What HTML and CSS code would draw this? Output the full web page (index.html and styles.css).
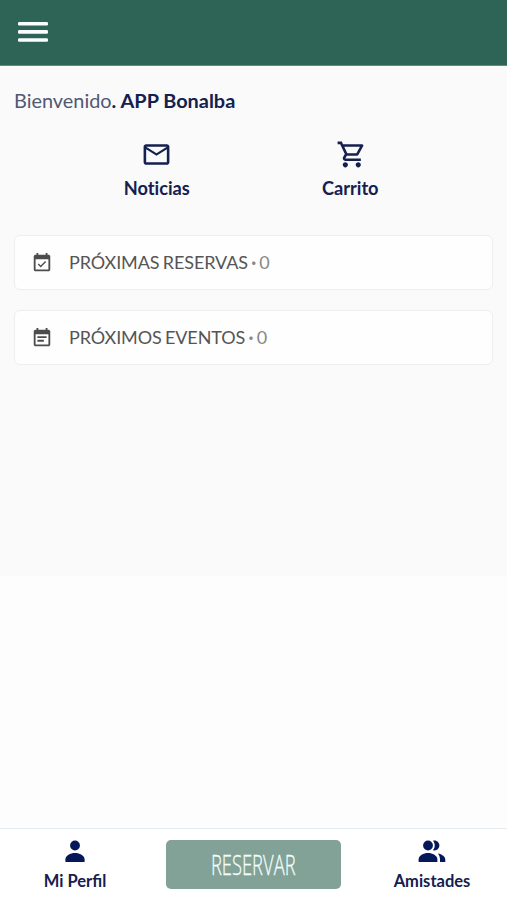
FILE: index.html
```html
<!DOCTYPE html>
<html lang="es">
<head>
    <meta charset="UTF-8">
    <meta name="viewport" content="width=device-width, initial-scale=1.0">
    <title>APP Bonalba</title>
    <link rel="stylesheet" href="styles.css">
</head>
<body>
    <header class="topbar">
        <svg class="menu" viewBox="0 0 30 20">
            <rect width="30" height="3.6" rx="1.3"/>
            <rect y="8.1" width="30" height="3.6" rx="1.3"/>
            <rect y="16.2" width="30" height="3.6" rx="1.3"/>
        </svg>
    </header>
    <main class="content">
        <p class="welcome">Bienvenido<b>. APP Bonalba</b></p>
        <div class="shortcuts">
            <a class="shortcut">
                <svg class="shortcut-icon" viewBox="0 0 24 24"><path d="M22 6c0-1.100-.9-2-2-2H4c-1.100 0-2 .9-2 2v12c0 1.100.9 2 2 2h16c1.100 0 2-.9 2-2V6zm-2 0l-8 5-8-5h16zm0 12H4V8l8 5 8-5v10z"/></svg>
                <span>Noticias</span>
            </a>
            <a class="shortcut">
                <svg class="shortcut-icon" viewBox="-1 0 24 24"><path d="M15.550 13c.75 0 1.410-.41 1.750-1.030l3.580-6.490c.37-.66-.11-1.480-.87-1.480H5.210l-.94-2H1v2h2l3.600 7.590-1.350 2.440C4.520 15.370 5.480 17 7 17h12v-2H7l1.100-2h7.450zM6.160 6h12.150l-2.760 5H8.530L6.160 6zM7 18c-1.100 0-1.990.9-1.990 2S5.900 22 7 22s2-.9 2-2-.9-2-2-2zm10 0c-1.100 0-1.990.9-1.990 2s.89 2 1.990 2 2-.9 2-2-.9-2-2-2z"/></svg>
                <span>Carrito</span>
            </a>
        </div>
        <div class="card">
            <svg class="card-icon" viewBox="0 0 24 24"><path d="M19 3h-1V1h-2v2H8V1H6v2H5c-1.100 0-2 .9-2 2v14c0 1.100.9 2 2 2h14c1.100 0 2-.9 2-2V5c0-1.100-.9-2-2-2zm0 16H5V8h14v11z"/><path d="M16.500 10.900l-1.060-1.060-4.880 4.880-2.110-2.110-1.060 1.060 3.170 3.170z"/></svg>
            <span class="card-title">PRÓXIMAS RESERVAS <span class="count"><b>·</b> 0</span></span>
        </div>
        <div class="card">
            <svg class="card-icon" viewBox="0 0 24 24"><path d="M19 3h-1V1h-2v2H8V1H6v2H5c-1.100 0-2 .9-2 2v14c0 1.100.9 2 2 2h14c1.100 0 2-.9 2-2V5c0-1.100-.9-2-2-2zm0 16H5V8h14v11z"/><path d="M7 10h10v2H7zM7 14h7v2H7z"/></svg>
            <span class="card-title">PRÓXIMOS EVENTOS <span class="count"><b>·</b> 0</span></span>
        </div>
    </main>
    <nav class="bottombar">
        <a class="tab">
            <svg class="tab-icon" viewBox="0 0 20 22"><circle cx="10" cy="5.500" r="4.900"/><path d="M.4 22v-2.500c0-4 5-6.500 9.600-6.500s9.600 2.500 9.600 6.500V22z"/></svg>
            <span>Mi Perfil</span>
        </a>
        <button class="book"><span class="book-label">RESERVAR</span></button>
        <a class="tab">
            <svg class="tab-icon friends" viewBox="0 0 28 22"><circle cx="10" cy="5.500" r="4.900"/><path d="M.6 22v-2.500c0-4 5-6.500 9.400-6.500s9.400 2.500 9.400 6.500V22z"/><path d="M15 .8c1.200-.4 2.400-.3 3.500.2 3.900 1.800 3.900 7.200 0 9-1.100.5-2.300.6-3.500.2 2.300-2.700 2.300-6.700 0-9.400zM20 13.400c4 .8 7.300 2.900 7.300 6.100V22H22v-2.500c0-2.500-.8-4.500-2-6.100z"/></svg>
            <span>Amistades</span>
        </a>
    </nav>
</body>
</html>
```
FILE: styles.css
```css
* {
    box-sizing: border-box;
}
body {
    margin: 0;
    height: 100vh;
    display: flex;
    flex-direction: column;
    font-family: Lato, sans-serif;
    color: #14204f;
    background: linear-gradient(#fafafa 576px, #fdfdfd 576px);
}
.topbar {
    height: 66px;
    padding: 22px 18px;
    background-color: #2e6456;
    border-bottom: 1px solid #66897f;
}
.menu {
    display: block;
    width: 30px;
    height: 20px;
    fill: #fafffd;
}
.content {
    flex: 1;
    padding: 22px 14px;
}
.welcome {
    margin: 0;
    font-size: 19.9px;
    line-height: 24px;
    color: #515873;
}
.welcome b {
    color: #14204f;
}
.shortcuts {
    display: flex;
    margin-top: 27px;
    padding: 0 46px;
}
.shortcut {
    flex: 1;
    display: flex;
    flex-direction: column;
    align-items: center;
    gap: 6px;
    font-size: 18.200px;
    font-weight: bold;
    font-variant-ligatures: none;
    line-height: 24px;
}
.shortcut-icon {
    width: 31px;
    height: 31px;
    fill: #14204f;
}
.card {
    display: flex;
    align-items: center;
    gap: 16px;
    height: 55px;
    margin-bottom: 20px;
    padding: 0 16px;
    font-size: 18px;
    color: #555;
    background-color: #fefefe;
    border: 1px solid #eee;
    border-radius: 6px;
}
.shortcuts + .card {
    margin-top: 35px;
}
.card-icon {
    width: 22px;
    height: 22px;
    fill: #4c4c4c;
}
.card-title {
    padding-bottom: 2px;
    letter-spacing: -0.1px;
    word-spacing: -1.200px;
}
.count {
    color: #888;
}
.bottombar {
    display: flex;
    justify-content: space-between;
    height: 72px;
    padding: 11px 0;
    background-color: #fff;
    border-top: 1px solid #e5ebee;
}
.tab {
    width: 150px;
    display: flex;
    flex-direction: column;
    align-items: center;
    gap: 8px;
    font-size: 16.500px;
    font-weight: bold;
    line-height: 22px;
}
.tab-icon {
    flex-shrink: 0;
    width: 20px;
    height: 22px;
    fill: #05195a;
}
.friends {
    width: 28px;
}
.book {
    width: 175px;
    height: 49px;
    padding: 0;
    display: flex;
    align-items: center;
    justify-content: center;
    border: 0;
    border-radius: 5px;
    background-color: #82a197;
}
.book-label {
    font-family: "Open Sans", sans-serif;
    font-size: 27px;
    font-weight: 300;
    color: #f4fffb;
    -webkit-text-stroke: 0.3px #f4fffb;
    transform: scaleX(0.68);
}
```
